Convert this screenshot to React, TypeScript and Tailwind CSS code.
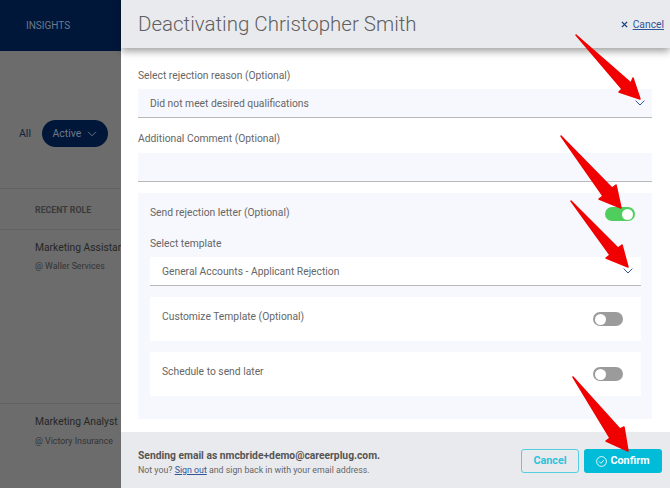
import React from "react";

const Chevron = () => (
  <svg width="10" height="6" viewBox="0 0 10 6" fill="none" stroke="#2f5597" strokeWidth="1">
    <path d="M.6.6L5 5l4.4-4.4" />
  </svg>
);

const Toggle = ({ on = false }: { on?: boolean }) => (
  <div
    className={`flex h-[14px] w-[30px] items-center rounded-full px-[2px] ${
      on ? "justify-end bg-[#4fce5d]" : "justify-start bg-[#9b9b9b]"
    }`}
  >
    <div className="h-[11px] w-[11px] rounded-full bg-white" />
  </div>
);

const Arrow = ({ points }: { points: string }) => (
  <polygon points={points} fill="#f00000" stroke="#f00000" strokeWidth="1.5" strokeLinejoin="round" />
);

export default function App() {
  return (
    <div className="relative flex h-[488px] w-[670px] overflow-hidden bg-white font-['Roboto',sans-serif]">
      {/* PAGE BEHIND THE PANEL */}
      <aside className="flex w-[121px] shrink-0 flex-col bg-[#6c6c6c]">
        <div className="flex h-[51px] items-center bg-[#00173a] pl-[26px] text-[10px] text-[#6e7a8c]">INSIGHTS</div>
        <div className="flex h-[137px] items-center gap-[11px] pl-[19px] pt-[28px]">
          <span className="text-[10.5px] text-[#10233f]">All</span>
          <div className="flex h-[27px] w-[66px] items-center justify-center gap-[6px] rounded-full bg-[#00173a] text-[10.5px] text-[#6e7a8c]">
            Active
            <svg width="10" height="6" viewBox="0 0 10 6" fill="none" stroke="#6e7a8c" strokeWidth="0.9">
              <path d="M1 .8l4 4 4-4" />
            </svg>
          </div>
        </div>
        <div className="flex h-[42px] items-center border-y border-[#626262] pl-[35px] pt-[3px] text-[8.8px] font-bold text-[#3a3a3a]">
          RECENT ROLE
        </div>
        <div className="h-[174px] overflow-hidden whitespace-nowrap border-b border-[#626262] pl-[35px] pt-[11px]">
          <div className="text-[10.3px] leading-[14px] text-[#262626]">Marketing Assistant</div>
          <div className="mt-[5px] text-[8.8px] leading-[12px] text-[#333333]">@ Waller Services</div>
        </div>
        <div className="overflow-hidden whitespace-nowrap pl-[35px] pt-[11px]">
          <div className="text-[10.3px] leading-[14px] text-[#262626]">Marketing Analyst</div>
          <div className="mt-[6px] text-[8.8px] leading-[12px] text-[#333333]">@ Victory Insurance</div>
        </div>
      </aside>

      {/* SIDE PANEL */}
      <main className="flex h-[488px] w-[549px] flex-col">
        <header className="z-10 flex h-[48px] shrink-0 items-center justify-between bg-[#e9eaee] pl-[17px] pr-[6px] shadow-[0_3px_8px_rgba(0,0,0,0.4)]">
          <h1 className="text-[20.5px] font-light text-[#5f5f5f]">Deactivating Christopher Smith</h1>
          <div className="flex items-center gap-[5px] pt-[1px] text-[10.3px] text-[#2f5597]">
            <svg width="7" height="7" viewBox="0 0 8 8" stroke="#1f3f7a" strokeWidth="1.6">
              <path d="M1 1l6 6M7 1L1 7" />
            </svg>
            <span className="underline">Cancel</span>
          </div>
        </header>

        <div className="flex flex-1 flex-col pl-[17px] pr-[18px] pt-[21px] text-[10.3px] text-[#666666]">
          <label className="leading-[14px]">Select rejection reason (Optional)</label>
          <div className="mt-[6px] flex h-[29px] items-center justify-between border-b border-[#b9b9b9] bg-[#f6f8fd] pl-[12px] pr-[7px]">
            <span className="pt-[2px]">Did not meet desired qualifications</span>
            <Chevron />
          </div>

          <label className="mt-[14px] leading-[14px]">Additional Comment (Optional)</label>
          <div className="mt-[7px] h-[29px] border-b border-[#b9b9b9] bg-[#f6f8fd]" />

          <section className="mt-[11px] flex h-[226px] flex-col bg-[#f6f8fd] pl-[12px] pr-[11px]">
            <div className="mt-[14px] flex h-[14px] items-center justify-between pr-[6px]">
              <span className="-mt-[2px]">Send rejection letter (Optional)</span>
              <Toggle on />
            </div>
            <div className="mt-[16px] leading-[14px]">Select template</div>
            <div className="mt-[6px] flex h-[29px] items-center justify-between border-b border-[#b9b9b9] bg-white pl-[12px] pr-[8px]">
              <span className="pt-[2px]">General Accounts - Applicant Rejection</span>
              <Chevron />
            </div>
            <div className="mt-[11px] flex h-[44px] items-center justify-between bg-white pl-[12px] pr-[18px]">
              <span className="-mt-[4px]">Customize Template (Optional)</span>
              <Toggle />
            </div>
            <div className="mt-[11px] flex h-[44px] items-center justify-between bg-white pl-[12px] pr-[18px]">
              <span className="-mt-[4px]">Schedule to send later</span>
              <Toggle />
            </div>
          </section>
        </div>

        <footer className="flex h-[56px] shrink-0 items-center justify-between bg-[#e9eaee] pl-[17px] pr-[8px] pt-[2px]">
          <div className="pt-[4px] text-[#666666]">
            <div className="text-[10.3px] font-bold leading-[14px] text-[#555555]">Sending email as nmcbride+demo@careerplug.com.</div>
            <div className="mt-[1px] text-[8.8px] leading-[13px]">
              Not you? <span className="text-[#2f5597] underline">Sign out</span> and sign back in with your email address.
            </div>
          </div>
          <div className="flex gap-[5px]">
            <button className="h-[24px] w-[58px] rounded-[3px] border border-[#54cfe2] text-[10.8px] font-bold text-[#2cc3dc]">
              Cancel
            </button>
            <button className="flex h-[24px] w-[78px] items-center justify-center gap-[3px] rounded-[3px] bg-[#00bcd8] text-[10.8px] font-bold text-white">
              <svg width="11" height="11" viewBox="0 0 11 11" fill="none" stroke="white" strokeWidth="0.9">
                <circle cx="5.5" cy="5.5" r="4.9" />
                <path d="M3.2 5.6l1.7 1.7 3-3.3" />
              </svg>
              Confirm
            </button>
          </div>
        </footer>
      </main>

      {/* RED ANNOTATION ARROWS */}
      <svg className="absolute left-0 top-0 z-20" width="670" height="488" viewBox="0 0 670 488">
        <Arrow points="576,35 631,83 633,78 640,99 619,92 622,89" />
        <Arrow points="561,136 612,188 616,185 621,208 599,199 603,196" />
        <Arrow points="571,201 618,248 622,245 628,267 606,258 610,255" />
        <Arrow points="573,377 620,429 624,427 628,451 606,441 610,438" />
      </svg>
    </div>
  );
}
